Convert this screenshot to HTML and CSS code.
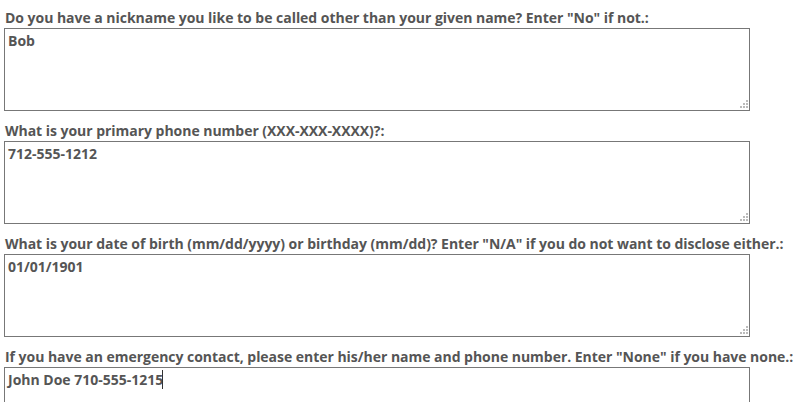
FILE: index.html
```html
<!DOCTYPE html>
<html>
<head>
  <title>Profile Questions</title>
  <link rel="stylesheet" href="styles.css">
</head>
<body>
  <form class="survey">
    <div class="field">
      <label class="field-label" for="nickname">Do you have a nickname you like to be called other than your given name? Enter "No" if not.:</label>
      <div class="input-wrap">
        <textarea id="nickname" class="field-input">Bob</textarea>
        <svg class="grip" width="9" height="9" viewBox="0 0 9 9"><rect x="6" y="0" width="2" height="2"/><rect x="3" y="3" width="2" height="2"/><rect x="6" y="3" width="2" height="2"/><rect x="0" y="6" width="2" height="2"/><rect x="3" y="6" width="2" height="2"/><rect x="6" y="6" width="2" height="2"/></svg>
      </div>
    </div>
    <div class="field">
      <label class="field-label" for="phone">What is your primary phone number (XXX-XXX-XXXX)?:</label>
      <div class="input-wrap">
        <textarea id="phone" class="field-input">712-555-1212</textarea>
        <svg class="grip" width="9" height="9" viewBox="0 0 9 9"><rect x="6" y="0" width="2" height="2"/><rect x="3" y="3" width="2" height="2"/><rect x="6" y="3" width="2" height="2"/><rect x="0" y="6" width="2" height="2"/><rect x="3" y="6" width="2" height="2"/><rect x="6" y="6" width="2" height="2"/></svg>
      </div>
    </div>
    <div class="field">
      <label class="field-label" for="birthday">What is your date of birth (mm/dd/yyyy) or birthday (mm/dd)? Enter "N/A" if you do not want to disclose either.:</label>
      <div class="input-wrap">
        <textarea id="birthday" class="field-input">01/01/1901</textarea>
        <svg class="grip" width="9" height="9" viewBox="0 0 9 9"><rect x="6" y="0" width="2" height="2"/><rect x="3" y="3" width="2" height="2"/><rect x="6" y="3" width="2" height="2"/><rect x="0" y="6" width="2" height="2"/><rect x="3" y="6" width="2" height="2"/><rect x="6" y="6" width="2" height="2"/></svg>
      </div>
    </div>
    <div class="field">
      <label class="field-label" for="emergency">If you have an emergency contact, please enter his/her name and phone number. Enter "None" if you have none.:</label>
      <div class="input-wrap">
        <textarea id="emergency" class="field-input active">John Doe 710-555-1215</textarea>
        <span class="caret"></span>
        <svg class="grip" width="9" height="9" viewBox="0 0 9 9"><rect x="6" y="0" width="2" height="2"/><rect x="3" y="3" width="2" height="2"/><rect x="6" y="3" width="2" height="2"/><rect x="0" y="6" width="2" height="2"/><rect x="3" y="6" width="2" height="2"/><rect x="6" y="6" width="2" height="2"/></svg>
      </div>
    </div>
  </form>
</body>
</html>
```

FILE: styles.css
```css
body {
  font-family: "Open Sans", Arial, sans-serif;
  color: #555;
  background-color: #fff;
  margin: 8px 4px;
}

.survey {
  display: flex;
  flex-direction: column;
}

.field {
  display: flex;
  flex-direction: column;
  margin-bottom: 10px;
}

.field-label {
  font-size: 14px;
  font-weight: 700;
  line-height: 19px;
  letter-spacing: -0.03px;
  margin-bottom: 1px;
  padding-left: 1px;
  white-space: nowrap;
}

.input-wrap {
  position: relative;
  width: 746px;
  height: 83px;
}

.field-input {
  display: block;
  width: 100%;
  height: 100%;
  box-sizing: border-box;
  border: 1px solid #777;
  padding: 3px 3px;
  margin: 0;
  resize: none;
  font-family: "Open Sans", Arial, sans-serif;
  font-size: 14px;
  font-weight: 700;
  line-height: 18px;
  color: #555;
}

.field-input:focus {
  outline: none;
}

/* text cursor of the field being typed in */
.caret {
  position: absolute;
  left: 158px;
  top: 3px;
  width: 1px;
  height: 19px;
  background-color: #333;
}

.grip {
  position: absolute;
  right: 1px;
  bottom: 2px;
  fill: #bbb;
}
```
